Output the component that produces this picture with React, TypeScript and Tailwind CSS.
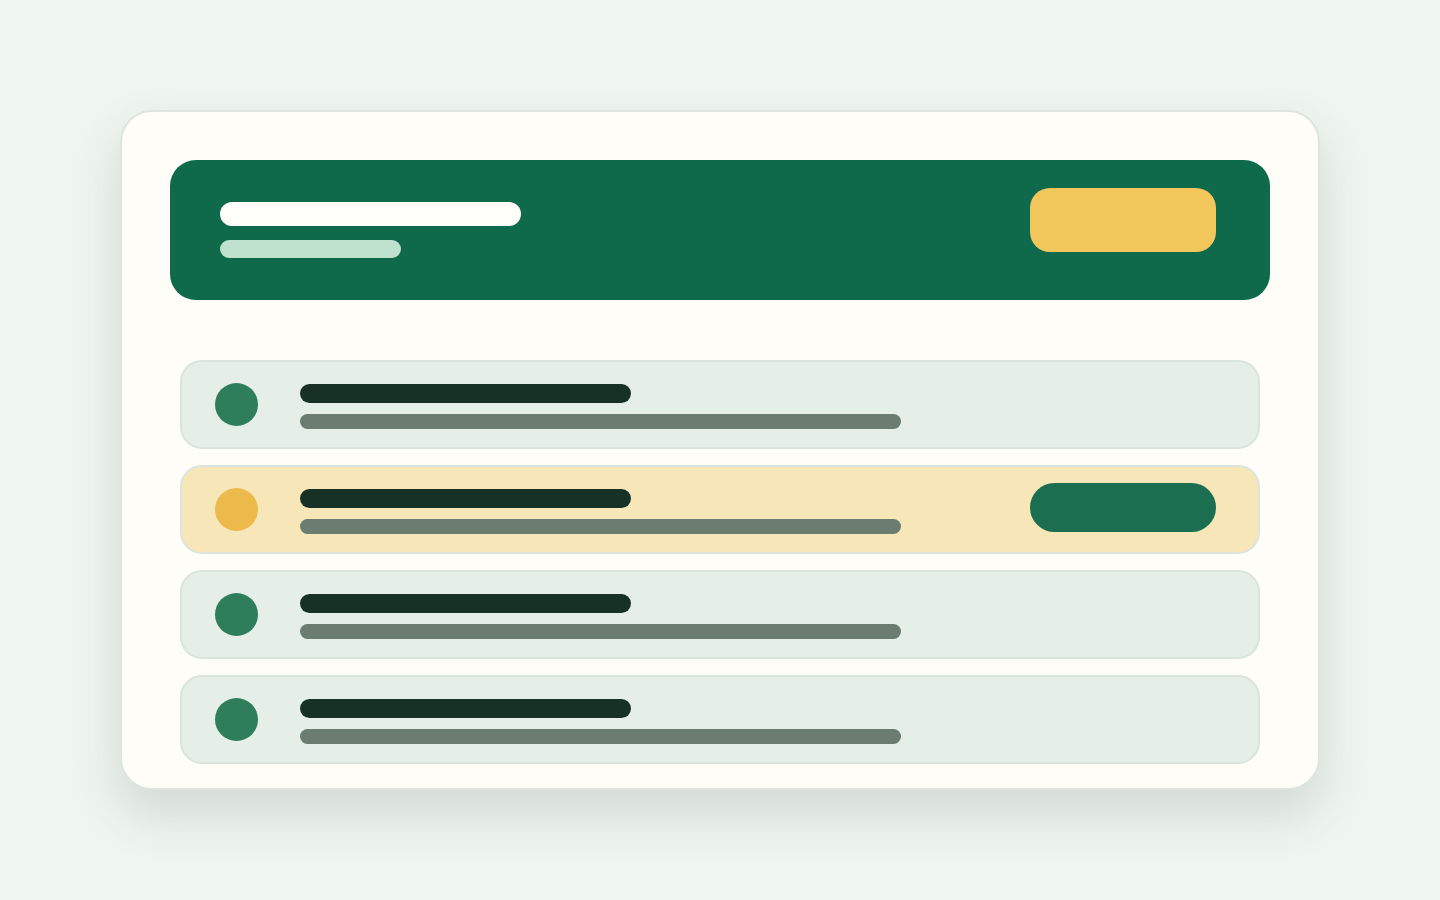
export default function App() {
  const rows = [
    { highlight: false },
    { highlight: true },
    { highlight: false },
    { highlight: false },
  ];

  return (
    <div className="min-h-screen w-full bg-[#eff5ef] flex items-start justify-center pt-[110px]">
      <div className="w-[1200px] h-[680px] rounded-[32px] border-2 border-[#dde5df] bg-[#fefdf8] shadow-[0_24px_50px_rgba(60,70,60,0.16)] px-[48px] pt-[48px]">
        {/* Header */}
        <div className="h-[140px] rounded-[26px] bg-[#0f6a4c] flex items-start justify-between pl-[50px] pr-[54px]">
          <div className="pt-[42px] flex flex-col gap-[14px]">
            <div className="w-[301px] h-[24px] rounded-full bg-[#fffef9]" />
            <div className="w-[181px] h-[18px] rounded-full bg-[#bfe2cf]" />
          </div>
          <div className="mt-[28px] w-[186px] h-[64px] rounded-[20px] bg-[#f1c75c]" />
        </div>

        {/* List */}
        <div className="mt-[60px] mx-[10px] flex flex-col gap-[16px]">
          {rows.map((row, i) => (
            <div
              key={i}
              className={
                row.highlight
                  ? "h-[89px] rounded-[22px] border-2 border-[#dbe5dc] bg-[#f7e7b8] flex items-center pl-[33px] pr-[42px]"
                  : "h-[89px] rounded-[22px] border-2 border-[#d8e4dc] bg-[#e5efe7] flex items-center pl-[33px] pr-[42px]"
              }
            >
              <div
                className={
                  row.highlight
                    ? "w-[43px] h-[43px] rounded-full bg-[#ebba4a] shrink-0"
                    : "w-[43px] h-[43px] rounded-full bg-[#2e7d5b] shrink-0"
                }
              />
              <div className="ml-[42px] flex flex-col gap-[11px] pt-[3px]">
                <div className="w-[331px] h-[19px] rounded-full bg-[#183126]" />
                <div className="w-[601px] h-[15px] rounded-full bg-[#6b7c71]" />
              </div>
              {row.highlight && (
                <div className="ml-auto mb-[4px] w-[186px] h-[49px] rounded-full bg-[#1b6f50]" />
              )}
            </div>
          ))}
        </div>
      </div>
    </div>
  );
}
